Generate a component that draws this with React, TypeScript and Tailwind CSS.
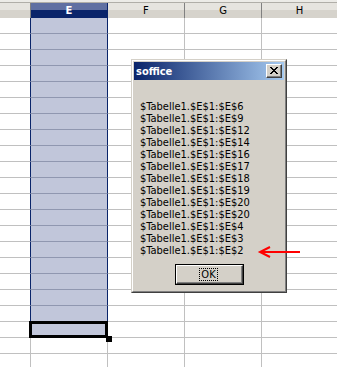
import React from "react";

const lines = [6, 9, 12, 14, 16, 17, 18, 19, 20, 20, 4, 3, 2];
const ROWS = 22;

function Row({ i }: { i: number }) {
  const sel = i < 20;
  const nav = sel && i < 19;
  return (
    <div className="flex h-[16px]">
      <div
        className={
          "w-[31px] h-full border-b border-r border-b-[#c0c0c0] " +
          (nav ? "border-r-[#0a246a]" : "border-r-[#c0c0c0]")
        }
      />
      <div
        className={
          "w-[77px] h-full border-b border-r " +
          (sel ? "bg-[#c1c6da] border-b-[#9097b0] " : "border-b-[#c0c0c0] ") +
          (nav ? "border-r-[#0a246a]" : "border-r-[#c0c0c0]")
        }
      />
      <div className="w-[77px] h-full border-b border-r border-[#c0c0c0]" />
      <div className="w-[77px] h-full border-b border-r border-[#c0c0c0]" />
      <div className="flex-1 h-full border-b border-[#c0c0c0]" />
    </div>
  );
}

function HeaderCell({ w, label, sel }: { w: string; label: string; sel?: boolean }) {
  return (
    <div
      className={
        w +
        " relative h-full flex items-center justify-center border-r " +
        (sel ? "border-r-[#0a246a]" : "border-r-[#808080]")
      }
    >
      <div className="absolute inset-0 flex flex-col">
        <div className={"h-[7px] " + (sel ? "bg-[#6070a2]" : "bg-[#e6e4df]")} />
        <div className={"flex-1 " + (sel ? "bg-[#0a246a]" : "bg-[#d6d3cc]")} />
      </div>
      <span
        className={
          "relative text-[10px] leading-none " + (sel ? "text-white font-bold" : "text-black")
        }
        style={{ fontFamily: '"DejaVu Sans", sans-serif' }}
      >
        {label}
      </span>
    </div>
  );
}

export default function App() {
  return (
    <div className="relative w-[337px] h-[367px] overflow-hidden bg-white">
      {/* column header */}
      <div className="h-[3px] bg-[#ecebe7] border-b border-[#b0aea8]" />
      <div className="flex h-[15px]">
        <HeaderCell w="w-[31px]" label="" />
        <HeaderCell w="w-[77px]" label="E" sel />
        <HeaderCell w="w-[77px]" label="F" />
        <HeaderCell w="w-[77px]" label="G" />
        <div className="flex-1 relative h-full flex items-center justify-center">
          <div className="absolute inset-0 flex flex-col">
            <div className="h-[7px] bg-[#e6e4df]" />
            <div className="flex-1 bg-[#d6d3cc]" />
          </div>
          <span
            className="relative text-[10px] leading-none text-black"
            style={{ fontFamily: '"DejaVu Sans", sans-serif' }}
          >
            H
          </span>
        </div>
      </div>
      {/* grid */}
      {Array.from({ length: ROWS }).map((_, i) => (
        <Row key={i} i={i} />
      ))}

      {/* cell cursor */}
      <div className="absolute left-[29px] top-[321px] w-[79px] h-[17px] border-[3px] border-black" />
      <div className="absolute left-[106px] top-[336px] w-[6px] h-[6px] bg-black" />

      {/* dialog */}
      <div className="absolute left-[131px] top-[59px] w-[156px] h-[234px] border border-t-[#d4d0c8] border-l-[#d4d0c8] border-b-[#404040] border-r-[#404040]">
        <div className="w-full h-full border border-t-white border-l-white border-b-[#808080] border-r-[#808080] bg-[#d4d0c8] p-[1px] flex flex-col">
          <div
            className="h-[18px] flex items-center justify-between pl-[2px] pr-[2px]"
            style={{ background: "linear-gradient(to right, #0a246a, #a6caf0)" }}
          >
            <span
              className="text-white font-bold text-[11px] leading-none"
              style={{ fontFamily: '"DejaVu Sans Condensed", "DejaVu Sans", sans-serif', fontStretch: "condensed" }}
            >
              soffice
            </span>
            <div className="w-[16px] h-[14px] border border-t-white border-l-white border-b-[#404040] border-r-[#404040] bg-[#d4d0c8]">
              <div className="w-full h-full border-b border-r border-[#808080] flex items-center justify-center">
                <svg width="8" height="7" viewBox="0 0 8 7" shapeRendering="crispEdges">
                  <path
                    d="M0 0h2v1h-2zM6 0h2v1h-2zM1 1h2v1h-2zM5 1h2v1h-2zM2 2h4v1h-4zM3 3h2v1h-2zM2 4h4v1h-4zM1 5h2v1h-2zM5 5h2v1h-2zM0 6h2v1h-2zM6 6h2v1h-2z"
                    fill="#000"
                  />
                </svg>
              </div>
            </div>
          </div>
          <div
            className="pl-[6px] mt-[21px] text-[11px] leading-[12px] text-black"
            style={{ fontFamily: '"DejaVu Sans Condensed", "DejaVu Sans", sans-serif', fontStretch: "condensed" }}
          >
            {lines.map((n, i) => (
              <div key={i}>{"$Tabelle1.$E$1:$E$" + n}</div>
            ))}
          </div>
          <div className="flex justify-center mt-[7px]">
            <div className="w-[69px] h-[21px] border border-black">
              <div className="w-full h-full border border-t-white border-l-white border-b-[#404040] border-r-[#404040]">
                <div className="w-full h-full border-b border-r border-[#808080] flex items-center justify-center">
                  <span
                    className="px-[1px] border border-dotted border-black text-[11px] leading-[11px] text-black"
                    style={{ fontFamily: '"DejaVu Sans Condensed", "DejaVu Sans", sans-serif', fontStretch: "condensed" }}
                  >
                    OK
                  </span>
                </div>
              </div>
            </div>
          </div>
        </div>
      </div>

      {/* red arrow */}
      <svg className="absolute left-[255px] top-[243px]" width="50" height="18" viewBox="0 0 50 18">
        <line x1="6" y1="9" x2="45" y2="9" stroke="#ff0000" strokeWidth="2" />
        <polyline points="15,4 5,9 15,14" fill="none" stroke="#ff0000" strokeWidth="2" />
      </svg>
    </div>
  );
}
